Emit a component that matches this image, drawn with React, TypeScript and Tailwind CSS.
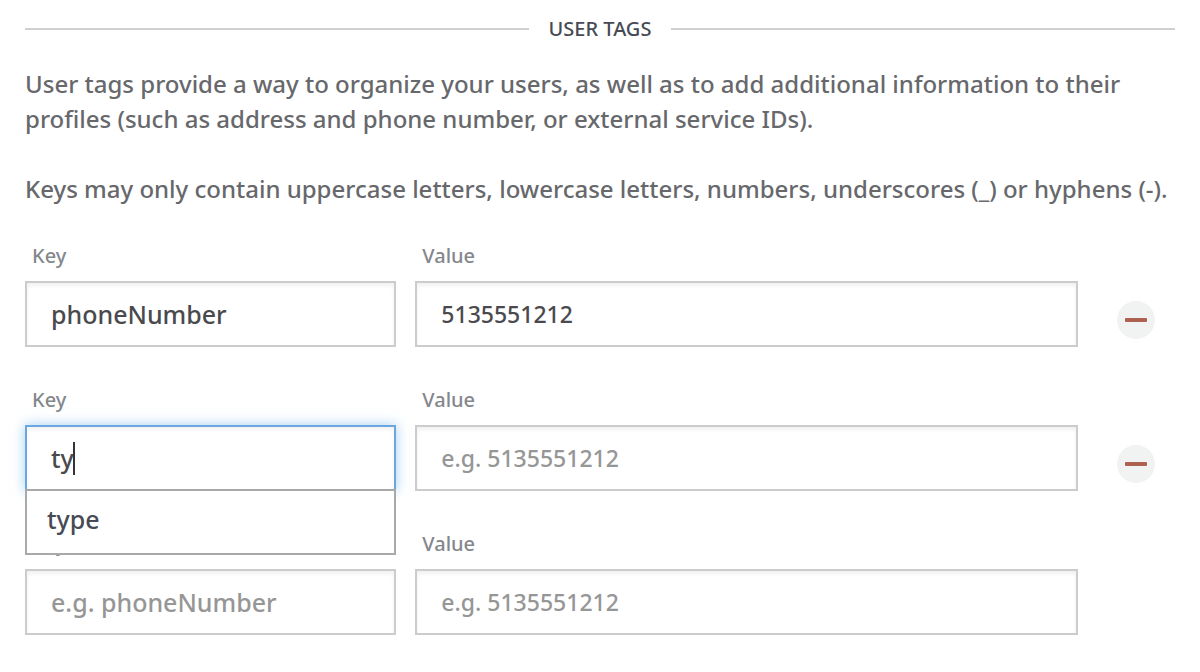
import { useState } from "react";

type Tag = { key: string; value: string };

const INITIAL_TAGS: Tag[] = [
  { key: "phoneNumber", value: "5135551212" },
  { key: "ty", value: "" },
  { key: "", value: "" },
];

const ACTIVE_ROW = 1;
const SUGGESTIONS = ["type"];

const LABEL = "block pl-[7px] text-[20px] leading-[30px] text-[#84888c]";
const FIELD =
  "block h-[66px] w-full border-2 bg-white px-6 text-[#4a4a4e] outline-none placeholder:text-[#969696] placeholder:opacity-100";
const IDLE = "border-[#cbcccd] shadow-[inset_0_3px_4px_rgba(0,0,0,0.06)]";
const ACTIVE =
  "border-[#6ba6de] caret-transparent shadow-[inset_0_3px_4px_rgba(0,0,0,0.05),0_0_12px_rgba(102,175,233,0.6)]";

function TagRow({
  tag,
  index,
  active,
  removable,
  onChange,
}: {
  tag: Tag;
  index: number;
  active: boolean;
  removable: boolean;
  onChange: (tag: Tag) => void;
}) {
  return (
    <div className="grid grid-cols-[371fr_662fr_78px] gap-x-[19px]">
      <div>
        <label htmlFor={`key-${index}`} className={LABEL}>
          Key
        </label>
        <div className="relative mt-[10px]">
          <input
            id={`key-${index}`}
            type="text"
            autoComplete="off"
            placeholder="e.g. phoneNumber"
            value={tag.key}
            onChange={(e) => onChange({ ...tag, key: e.target.value })}
            className={`${FIELD} text-[25px] ${active ? ACTIVE : IDLE}`}
          />
          {active && (
            <>
              <span className="absolute top-[17px] left-[48px] h-[33px] w-[2px] bg-[#333338]" />
              <ul className="absolute inset-x-0 top-16 z-10 border-2 border-[#a9a9a9] bg-white">
                {SUGGESTIONS.map((s) => (
                  <li key={s}>
                    <button
                      type="button"
                      onClick={() => onChange({ ...tag, key: s })}
                      className="block h-[62px] w-full px-5 pb-1 text-left text-[25px] text-[#474a54]"
                    >
                      {s}
                    </button>
                  </li>
                ))}
              </ul>
            </>
          )}
        </div>
      </div>
      <div>
        <label htmlFor={`value-${index}`} className={LABEL}>
          Value
        </label>
        <input
          id={`value-${index}`}
          type="text"
          autoComplete="off"
          placeholder="e.g. 5135551212"
          value={tag.value}
          onChange={(e) => onChange({ ...tag, value: e.target.value })}
          className={`${FIELD} text-[23px] ${IDLE} mt-[10px]`}
        />
      </div>
      {removable && (
        <div className="flex justify-center pt-[60px]">
          <button
            type="button"
            aria-label="Remove tag"
            className="flex size-[38px] items-center justify-center rounded-full bg-[#f1f3f3]"
          >
            <span className="h-[4px] w-[22px] rounded-[1px] bg-[#ae6150]" />
          </button>
        </div>
      )}
    </div>
  );
}

export default function App() {
  const [tags, setTags] = useState(INITIAL_TAGS);

  return (
    <main className="min-h-screen bg-white px-[25px] pt-[13px] pb-9 font-['Noto_Sans',sans-serif] font-medium">
      <div className="flex items-center gap-5">
        <div className="h-[2px] flex-1 bg-[#d0d0d0]" />
        <h1 className="pt-px text-[20px] leading-[30px] font-medium text-[#474a54]">USER TAGS</h1>
        <div className="h-[2px] flex-1 bg-[#d0d0d0]" />
      </div>
      <div className="mt-[22px] flex flex-col gap-[35px] text-[24px] leading-[35px] text-[#67686c]">
        <p>
          User tags provide a way to organize your users, as well as to add additional information to their profiles
          (such as address and phone number, or external service IDs).
        </p>
        <p>Keys may only contain uppercase letters, lowercase letters, numbers, underscores (_) or hyphens (-).</p>
      </div>
      <form className="mt-[35px] flex flex-col gap-[38px]" onSubmit={(e) => e.preventDefault()}>
        {tags.map((tag, i) => (
          <TagRow
            key={i}
            tag={tag}
            index={i}
            active={i === ACTIVE_ROW}
            removable={i < tags.length - 1}
            onChange={(next) => setTags(tags.map((t, j) => (j === i ? next : t)))}
          />
        ))}
      </form>
    </main>
  );
}
